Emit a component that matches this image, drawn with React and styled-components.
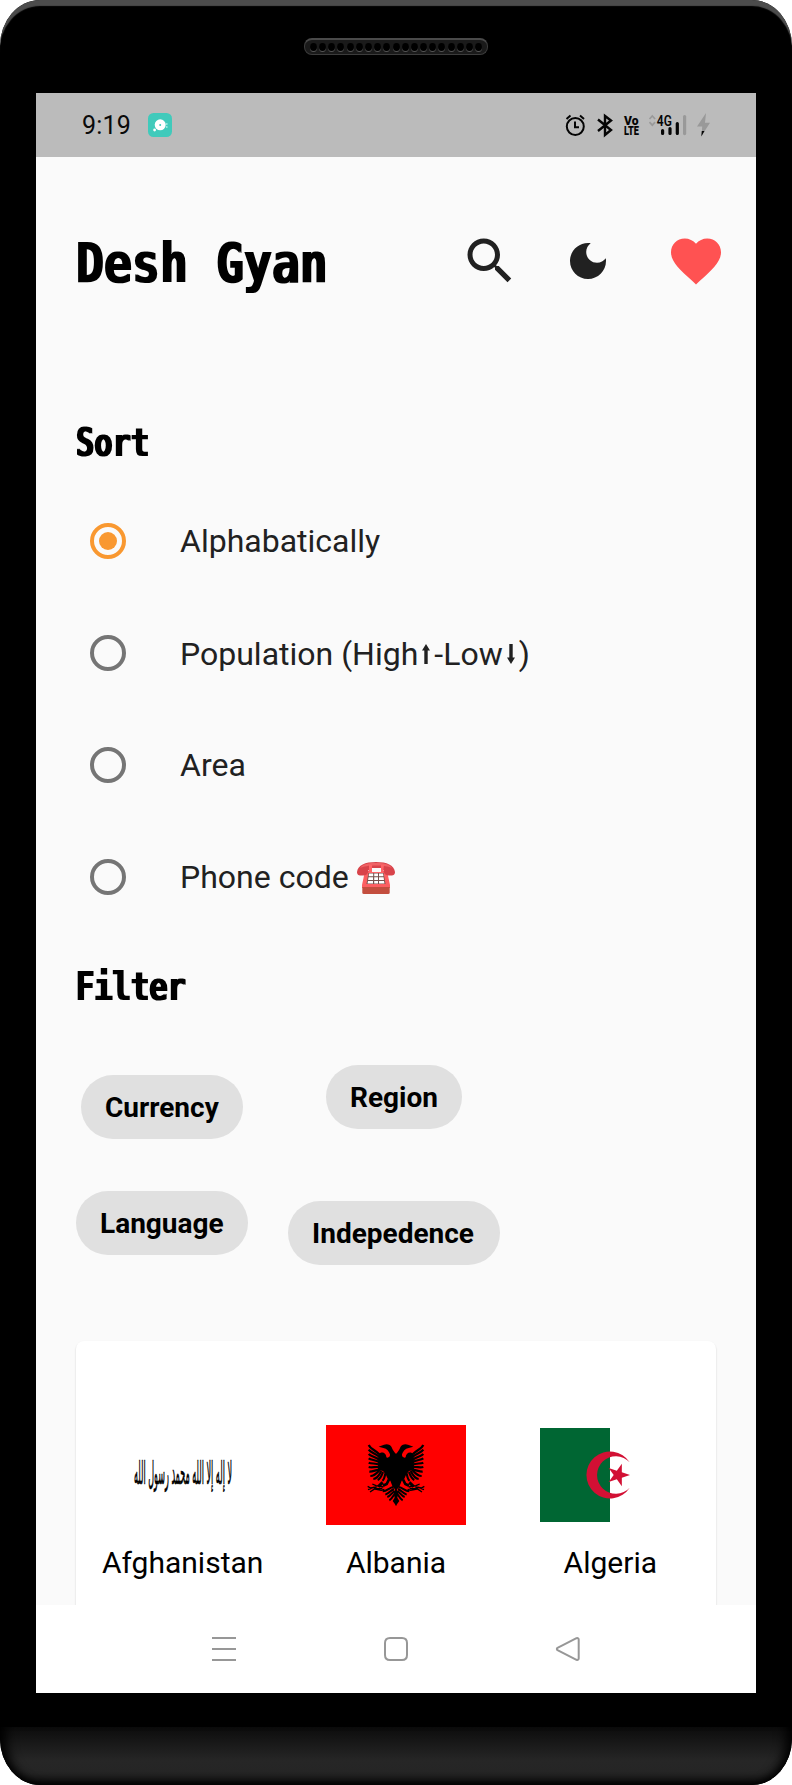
import React from "react";
import styled, { createGlobalStyle } from "styled-components";

const GlobalStyle = createGlobalStyle`
  * { box-sizing: border-box; }
  body { margin: 0; background: #fff; font-family: Roboto, "Liberation Sans", sans-serif; }
  svg { display: block; }
`;

const Phone = styled.div`
  width: 792px;
  height: 1785px;
  display: flex;
  flex-direction: column;
  align-items: center;
  overflow: hidden;
  background: #000;
  border-radius: 40px 40px 40px 40px / 46px 46px 46px 46px;
  box-shadow: inset 0 7px 1px -1px #4c4c4c;
`;

const TopBezel = styled.div`
  height: 93px;
  width: 100%;
  display: flex;
  justify-content: center;
  align-items: flex-start;
  padding-top: 38px;
`;

const Speaker = styled.div`
  width: 184px;
  height: 17px;
  border-radius: 8px;
  border: 1.5px solid #3c3c3c;
  border-top: 2.5px solid #4a4a4a;
  background: #1a1a1a;
  display: flex;
  align-items: center;
  justify-content: center;
  gap: 2.2px;
`;

const Hole = styled.i`
  width: 7px;
  height: 8px;
  border-radius: 50%;
  background: #000;
  box-shadow: 0 1px 0 #555;
`;

const Screen = styled.div`
  width: 720px;
  height: 1600px;
  display: flex;
  flex-direction: column;
  background: #fff;
`;

const Chin = styled.div`
  width: 100%;
  height: 58px;
  margin-top: 34px;
  border-radius: 0 0 40px 40px / 0 0 46px 46px;
  background: linear-gradient(#0c0c0c, #262626 58%, #252525 78%, #161616);
  box-shadow: inset 16px 0 12px -10px #000, inset -16px 0 12px -10px #000, inset 0 -8px 8px -5px #000;
`;

const StatusBar = styled.div`
  height: 64px;
  background: #bbb;
  display: flex;
  align-items: center;
  justify-content: space-between;
  padding: 0 44px 0 46px;
`;

const StatusLeft = styled.div`
  display: flex;
  align-items: center;
  gap: 17px;
`;

const Clock = styled.span`
  width: 49px;
  font-size: 25px;
  line-height: 30px;
  padding-top: 1px;
  letter-spacing: 0.2px;
  white-space: nowrap;
  color: #0a0a0a;
`;

const AppScreen = styled.main`
  height: 1448px;
  overflow: hidden;
  background: #fafafa;
  padding: 0 40px;
`;

const Header = styled.header`
  height: 208px;
  display: flex;
  align-items: center;
`;

const PixelText = styled.h1`
  margin: 0;
  padding-top: ${(p) => p.$drop || 0}px;
  width: ${(p) => p.$width}px;
  font-family: "DejaVu Sans Mono", monospace;
  font-weight: 700;
  font-size: ${(p) => p.$size}px;
  line-height: 1;
  color: #000;
  white-space: nowrap;
  transform: scaleX(${(p) => p.$squeeze});
  transform-origin: left center;
  filter: url(#blocky);
`;

const Defs = styled.svg`
  position: absolute;
  width: 0;
  height: 0;
`;

const Actions = styled.div`
  display: flex;
  align-items: center;
  margin-left: 134px;
`;

const ActionButton = styled.button`
  flex: none;
  padding: 0;
  border: 0;
  background: none;
  margin-left: ${(p) => p.$gap || 0}px;
`;

const SectionHead = styled.div`
  height: ${(p) => p.$height}px;
  padding-top: ${(p) => p.$top}px;
`;

const Option = styled.label`
  height: 112px;
  display: flex;
  align-items: center;
  padding-left: 14px;
`;

const Radio = styled.span`
  width: 36px;
  height: 36px;
  border-radius: 50%;
  border: 4px solid ${(p) => (p.$on ? "#f99830" : "#757575")};
  display: flex;
  align-items: center;
  justify-content: center;
  &::after {
    content: "";
    width: 18px;
    height: 18px;
    border-radius: 50%;
    background: ${(p) => (p.$on ? "#f99830" : "transparent")};
  }
`;

const OptionText = styled.span`
  display: flex;
  align-items: center;
  margin-left: 54px;
  padding-top: ${(p) => p.$drop || 0}px;
  font-size: 32px;
  line-height: 38px;
  color: #212121;
  white-space: pre;
`;

const ChipRow = styled.div`
  display: flex;
  align-items: flex-start;
  height: ${(p) => p.$height}px;
`;

const Chip = styled.button`
  width: ${(p) => p.$width}px;
  height: 64px;
  margin: ${(p) => p.$top || 0}px 0 0 ${(p) => p.$left || 0}px;
  padding: 0 0 0 24px;
  border: 0;
  border-radius: 32px;
  background: #e0e0e0;
  color: #000;
  font: 700 28px/33px Roboto, "Liberation Sans", sans-serif;
  text-align: left;
  white-space: nowrap;
`;

const Card = styled.section`
  height: 320px;
  border-radius: 8px;
  background: #fff;
  box-shadow: 0 2px 2px rgba(0, 0, 0, 0.1), 0 1px 2px rgba(0, 0, 0, 0.1);
  display: grid;
  grid-template-columns: repeat(3, 1fr);
  padding-top: 84px;
`;

const Country = styled.div`
  display: flex;
  flex-direction: column;
  align-items: center;
  color: #000;
  font-size: 30px;
  line-height: 36px;
  gap: 20px;
  padding-left: ${(p) => p.$shift || 0}px;
`;

const FlagBox = styled.div`
  height: 100px;
  display: flex;
  align-items: center;
`;

const NavBar = styled.nav`
  height: 88px;
  display: flex;
  align-items: center;
  justify-content: center;
  gap: 146px;
`;

function StatusIcons() {
  return (
    <svg width="148" height="28" viewBox="564 111 148 28" fill="none" stroke="#050505" strokeWidth="2">
      <circle cx="575.3" cy="126.5" r="8.5" />
      <path d="M575 121.5v5.7h4M566.5 119l4-3.500M584 119l-4-3.500" />
      <path d="M598 119.500l13 10.500-6 5v-19l6 4.500-13 10.500" strokeWidth="2.400" />
      <g fill="#050505" stroke="none" fontFamily="Roboto" fontWeight="900">
        <text x="624" y="124.5" fontSize="13.5" textLength="14.5" lengthAdjust="spacingAndGlyphs">Vo</text>
        <text x="624" y="135" fontSize="13" textLength="15" lengthAdjust="spacingAndGlyphs">LTE</text>
        <text x="656.8" y="126.3" fontSize="14.5" fontWeight="600" textLength="15" lengthAdjust="spacingAndGlyphs">4G</text>
      </g>
      <path d="M649.5 119l2.800-3 2.800 3M649.5 122.200l2.800 3 2.800-3" stroke="#999" strokeWidth="1.7" />
      <path d="M662.600 130.500v3M670 128.500v5M677.300 123.500v10" strokeWidth="3.2" strokeLinecap="round" />
      <path d="M684.600 116.600v17" stroke="#999" strokeWidth="3.2" strokeLinecap="round" />
      <path d="M706 113l-9 13.500h5.200L701.500 136l8.500-13.200h-5z" fill="#999" stroke="none" />
      <path d="M701.800 131h2.700l-3.200 5.400z" fill="#050505" stroke="none" />
    </svg>
  );
}

function AppBadge() {
  return (
    <svg width="24" height="24" viewBox="0 0 24 24">
      <rect width="24" height="24" rx="5.5" fill="#40cabb" />
      <circle cx="12.2" cy="11.8" r="5.5" fill="#fff" />
      <circle cx="12.2" cy="12" r="1" fill="#40cabb" />
      <circle cx="6.6" cy="17" r="1.4" fill="#fff" />
      <path d="M18.8 10v5" stroke="#a5ebe3" strokeWidth="1.3" strokeDasharray="2 1" />
    </svg>
  );
}

const icons = {
  search: "M15.5 14h-.79l-.28-.27C15.41 12.59 16 11.11 16 9.5 16 5.91 13.09 3 9.5 3S3 5.91 3 9.5 5.91 16 9.5 16c1.61 0 3.09-.59 4.23-1.57l.27.28v.79l5 4.99L20.49 19l-4.99-5zm-6 0C7.01 14 5 11.99 5 9.5S7.01 5 9.5 5 14 7.01 14 9.5 11.99 14 9.5 14z",
  moon: "M12 3c-4.97 0-9 4.03-9 9s4.03 9 9 9 9-4.03 9-9c0-.46-.04-.92-.1-1.36-.98 1.37-2.58 2.26-4.4 2.26-2.98 0-5.4-2.42-5.4-5.4 0-1.81.89-3.42 2.26-4.4-.44-.06-.9-.1-1.36-.1z",
  heart: "M12 21.35l-1.45-1.32C5.4 15.36 2 12.28 2 8.5 2 5.42 4.42 3 7.5 3c1.74 0 3.41.81 4.5 2.09C13.09 3.81 14.76 3 16.5 3 19.58 3 22 5.42 22 8.5c0 3.78-3.4 6.86-8.55 11.54L12 21.35z",
};

function MaterialIcon({ name, size, color = "#212121" }) {
  return (
    <svg width={size} height={size} viewBox="0 0 24 24">
      <path d={icons[name]} fill={color} />
    </svg>
  );
}

function Arrow({ down }) {
  return (
    <svg width="16" height="38" viewBox="0 0 16 38" fill="#212121" role="img" aria-label={down ? "down" : "up"}>
      <path d="M8 9l4 6.500H9.700v13.500H6.300V15.500H4z" transform={down ? "rotate(180 8 19)" : undefined} />
    </svg>
  );
}

function Telephone() {
  return (
    <svg width="38" height="33" viewBox="0 0 38 33">
      <path d="M8 10h22l3 14v3H5v-3z" fill="#fc5f61" />
      <path d="M5.3 26h27.4v5.500q0 1.500-1.500 1.500H6.800q-1.500 0-1.500-1.500z" fill="#c34e3e" />
      <path d="M12 4h3v8h-3zM23 4h3v8h-3z" fill="#f35457" />
      <path d="M0 11C1 4 8 1 19 1s18 3 19 10c0 3-2 3.500-5 3.500-4 0-6-1-6.500-5.500h-15C11 13.500 9 14.500 5 14.500c-3 0-5-.5-5-3.500z" fill="#d8434a" />
      <path d="M3 7C7 2 13 2 19 2s12 0 16 5C29 3.500 9 3.500 3 7z" fill="#ef6265" />
      <path d="M14 7h10v4H14z" fill="#fafafa" />
      <path d="M12 3.500l3 .5v7h9V4l3-.5-1 9H12z" fill="#ff6467" />
      <path d="M11.500 12h15l2 11h-19z" fill="#75504b" />
      <path d="M12 12.500h4.200v2.700h-4.500zM17.200 12.500h3.800v2.700h-3.800zM22 12.500h4l.5 2.700H22zM11.500 16.200h4.600v2.700h-5zM17.200 16.200h3.800v2.700h-3.800zM22 16.200h4.600l.4 2.700h-5zM11 20h5v2.500h-5.500zM17.200 20h3.800v2.500h-3.800zM22 20h5l.5 2.500H22z" fill="#fff" />
    </svg>
  );
}

function AfghanistanFlag() {
  return (
    <svg width="98" height="44" viewBox="0 0 98 44" overflow="visible">
      <g transform="translate(98 31) scale(1 2.3)">
        <text direction="rtl" fontFamily="DejaVu Sans, sans-serif" fontSize="14" textLength="98" lengthAdjust="spacingAndGlyphs" stroke="#000" strokeWidth=".3">
          لا إله إلا الله محمد رسول الله
        </text>
      </g>
    </svg>
  );
}

function EagleHalf() {
  return (
    <>
      <path d="M829 103C823 97 818 90 815 82 812 74 801 70 792 74L776 80 790 84C801 86 807 94 810 103 811 111 804 115 799 112 799 103 792 96 782 98 777 99 775 103 775 108L774 150 789 153 798 165 803 176 811 182 818 200 829 212z" />
      <g fill="none" stroke="#000" strokeWidth="6.5">
        <path d="M746 75C751 87 763 88 778 103" />
        <path d="M746 89C753 99 765 99 779 111" />
        <path d="M746 102C753 110 765 110 779 120" />
        <path d="M746 115C754 121 766 119 779 127" />
        <path d="M746 128C755 132 766 129 779 134" />
        <path d="M746 141C757 144 767 139 782 142" />
        <path d="M748 155C758 156 768 149 781 148" />
        <path d="M751 168C763 168 770 160 779 150" />
        <path d="M760 177C771 176 778 165 784 153" />
        <path d="M773 180C782 176 785 166 789 156" />
        <path d="M787 182C793 179 794 171 796 160" />
        <path d="M807 178L800 192 789 197" strokeWidth="8" />
        <path d="M788 187L775 200" strokeWidth="9" />
      </g>
      <path d="M790 201L768 197 757 192M787 206L765 206 750 216M770 201L752 204 743 199M761 202L744 209M765 207L784 211 793 208" fill="none" stroke="#000" strokeWidth="4" />
      <path d="M820 201C808 203 802 212 788 214M822 207C812 211 808 220 796 224M824 213C817 217 812 228 802 231M827 219C820 224 818 236 808 241" fill="none" stroke="#000" strokeWidth="6" />
      <path d="M829 205L821 218 824 233 818 243 829 258z" />
    </>
  );
}

function AlbaniaFlag() {
  return (
    <svg width="140" height="100" viewBox="618 15 420 300">
      <path d="M618 15h420v300H618z" fill="#f00" />
      <EagleHalf />
      <g transform="translate(1656 0) scale(-1 1)"><EagleHalf /></g>
    </svg>
  );
}

const star = Array.from({ length: 10 }, (_, i) => {
  const r = i % 2 ? 4.5 : 11.8;
  const a = (i * Math.PI) / 5;
  return `${78.2 + r * Math.cos(a)},${47 + r * Math.sin(a)}`;
}).join(" ");

function AlgeriaFlag() {
  return (
    <svg width="140" height="94" viewBox="0 0 140 94">
      <path d="M0 0h70v94H0z" fill="#063" />
      <path d="M89.700 34.300A23.500 23.500 0 1 0 89.700 59.700A18.800 18.800 0 1 1 89.700 34.300z" fill="#d21034" />
      <polygon points={star} fill="#d21034" />
    </svg>
  );
}

function NavIcon({ d }) {
  return (
    <svg width="26" height="26" viewBox="0 0 26 26" fill="none" stroke="#979797" strokeWidth="2" strokeLinejoin="round">
      <path d={d} />
    </svg>
  );
}

export default function App() {
  return (
    <>
      <GlobalStyle />
      <Defs aria-hidden="true">
        <filter id="blocky" x="-5%" y="-10%" width="110%" height="130%">
          <feMorphology operator="dilate" radius="1 0" />
        </filter>
      </Defs>
      <Phone>
        <TopBezel>
          <Speaker>{Array.from({ length: 19 }, (_, i) => <Hole key={i} />)}</Speaker>
        </TopBezel>
        <Screen>
          <StatusBar>
            <StatusLeft>
              <Clock>9:19</Clock>
              <AppBadge />
            </StatusLeft>
            <StatusIcons />
          </StatusBar>
          <AppScreen>
            <Header>
              <PixelText $size={56} $width={250} $squeeze={0.83} $drop={4}>Desh Gyan</PixelText>
              <Actions>
                <ActionButton aria-label="Search"><MaterialIcon name="search" size={60} /></ActionButton>
                <ActionButton aria-label="Dark mode" $gap={44}><MaterialIcon name="moon" size={48} /></ActionButton>
                <ActionButton aria-label="Favourites" $gap={54}><MaterialIcon name="heart" size={60} color="#ff5252" /></ActionButton>
              </Actions>
            </Header>
            <SectionHead $height={120} $top={59}>
              <PixelText as="h2" $size={38.5} $width={100} $squeeze={0.79}>Sort</PixelText>
            </SectionHead>
            <Option><Radio $on /><OptionText>Alphabatically</OptionText></Option>
            <Option>
              <Radio />
              <OptionText $drop={2}>Population (High<Arrow />-Low<Arrow down />)</OptionText>
            </Option>
            <Option><Radio /><OptionText>Area</OptionText></Option>
            <Option><Radio /><OptionText>Phone code <Telephone /></OptionText></Option>
            <SectionHead $height={132} $top={35}>
              <PixelText as="h2" $size={38.5} $width={150} $squeeze={0.79}>Filter</PixelText>
            </SectionHead>
            <ChipRow $height={126}>
              <Chip $width={162} $left={5} $top={10}>Currency</Chip>
              <Chip $width={136} $left={83}>Region</Chip>
            </ChipRow>
            <ChipRow $height={150}>
              <Chip $width={172}>Language</Chip>
              <Chip $width={212} $left={40} $top={10}>Indepedence</Chip>
            </ChipRow>
            <Card>
              <Country><FlagBox><AfghanistanFlag /></FlagBox>Afghanistan</Country>
              <Country><FlagBox><AlbaniaFlag /></FlagBox>Albania</Country>
              <Country $shift={2}><FlagBox><AlgeriaFlag /></FlagBox>Algeria</Country>
            </Card>
          </AppScreen>
          <NavBar>
            <NavIcon d="M1 2h24M1 13h24M1 24h24" />
            <NavIcon d="M7 2h12q5 0 5 5v12q0 5-5 5H7q-5 0-5-5V7q0-5 5-5z" />
            <NavIcon d="M21.500 2.200L2.500 11.800q-1.300 1.200 0 2.400L21.500 23.800q2 .7 2.200-1.500V3.700q-.2-2.200-2.200-1.500z" />
          </NavBar>
        </Screen>
        <Chin />
      </Phone>
    </>
  );
}
